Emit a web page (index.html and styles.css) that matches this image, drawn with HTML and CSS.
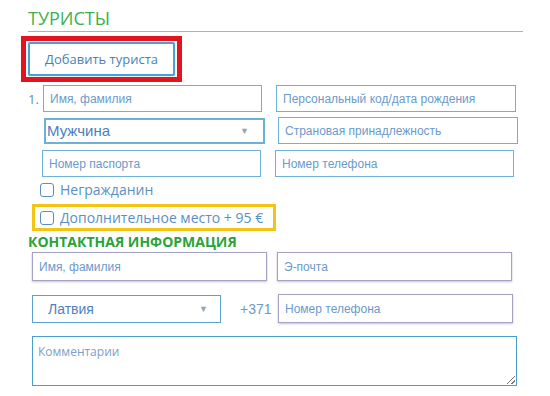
FILE: index.html
```html
<!DOCTYPE html>
<html>
<head>
<meta charset="utf-8">
<link rel="stylesheet" href="styles.css">
</head>
<body>
<div class="page">
  <h2 class="title">ТУРИСТЫ</h2>
  <div class="add-wrap"><button class="add-btn">Добавить туриста</button></div>

  <div class="row r1">
    <span class="num">1.</span>
    <div class="field w219">Имя, фамилия</div>
    <div class="field w240 ml14">Персональный код/дата рождения</div>
  </div>
  <div class="row r2">
    <div class="field select w221 sel-gender"><span>Мужчина</span><span class="arrow">▼</span></div>
    <div class="field w240 ml13">Страновая принадлежность</div>
  </div>
  <div class="row r3">
    <div class="field w219">Номер паспорта</div>
    <div class="field w239 ml14">Номер телефона</div>
  </div>

  <label class="check c1"><span class="box"></span>Негражданин</label>
  <div class="extra"><label class="check"><span class="box"></span>Дополнительное место + 95 €</label></div>

  <h3 class="subtitle">КОНТАКТНАЯ ИНФОРМАЦИЯ</h3>
  <div class="row r4">
    <div class="field contact w235">Имя, фамилия</div>
    <div class="field contact w235 ml10">Э-почта</div>
  </div>
  <div class="row r5">
    <div class="field select w189 sel-country"><span>Латвия</span><span class="arrow">▼</span></div>
    <span class="code">+371</span>
    <div class="field contact w235">Номер телефона</div>
  </div>
  <div class="comment">Комментарии<span class="grip"></span></div>
</div>
</body>
</html>
```
FILE: styles.css
```css
* { box-sizing: border-box; }
body { margin: 0; background: #fff; font-family: "Liberation Sans", Arial, sans-serif; }
.page { width: 550px; height: 396px; padding: 0 27px 0 28px; position: relative; }
.title {
  margin: 0; padding-top: 7px; height: 32px;
  font-family: "Open Sans", sans-serif; font-weight: 400; font-size: 18px;
  color: #3db04d; line-height: 22px;
  border-bottom: 1px solid #8dbad8; width: 495px;
}
.add-wrap {
  margin: 4px 0 0 -7px; width: 161px; height: 46px;
  border: 5px solid #e3141f; padding: 1px 2px;
}
.add-btn {
  width: 147px; height: 34px; margin: 0;
  background: #fff; border: 2px solid #4d9fd6; border-radius: 2px;
  font-family: "Open Sans", sans-serif; font-size: 13px; color: #4d7fb4;
  box-shadow: 0 0 2px rgba(77,159,214,.5);
}
.row { display: flex; align-items: center; }
.r1 { margin-top: 3px; }
.r2 { margin-top: 5px; margin-left: 16px; }
.r3 { margin-top: 6px; margin-left: 14px; }
.num { width: 15px; font-family: "Open Sans", sans-serif; font-size: 13px; color: #5a8fc4; }
.field {
  height: 27px; border: 1.5px solid #6eb0d6;
  padding: 0 6px; display: flex; align-items: center;
  font-size: 12px; color: #6b9acb; white-space: nowrap;
}
.w219 { width: 219px; } .w221 { width: 221px; } .w240 { width: 240px; } .w239 { width: 239px; }
.w235 { width: 235px; } .w189 { width: 189px; }
.ml14 { margin-left: 14px; } .ml13 { margin-left: 13px; } .ml10 { margin-left: 10px; }
.select { justify-content: space-between; }
.sel-gender { height: 26px; padding: 0 14px 0 1px; font-size: 15px; color: #4a7fbf; border-width: 2px; }
.arrow { font-size: 9px; color: #9aa3ad; }
.check {
  display: flex; align-items: center; font-family: "Open Sans", sans-serif;
  font-size: 14px; color: #5a8fc4; line-height: 18px;
}
.box {
  width: 14px; height: 14px; border: 1.5px solid #5a8fc4; border-radius: 3px;
  margin-right: 6px; background: #fff;
}
.c1 { margin: 4px 0 0 12px; }
.extra {
  margin: 5px 0 0 4px; width: 244px; height: 27px;
  border: 3px solid #f4c414; padding-left: 5px; display: flex; align-items: center;
}
.subtitle {
  margin: 2px 0 0 0; font-family: "Open Sans", sans-serif; font-weight: 700;
  font-size: 14px; line-height: 18px; color: #2aa237;
}
.contact { border: 1.5px solid #a4a2c4; box-shadow: 0 1px 2px rgba(80,80,120,.35); height: 29px; }
.r4 { margin-top: 1px; margin-left: 4px; }
.r5 { margin-top: 13px; margin-left: 4px; }
.sel-country { height: 28px; padding: 0 12px 0 15px; font-size: 14px; color: #4f82bd; border: 1.5px solid #5aa3cf; }
.code { width: 57px; padding-left: 19px; font-size: 14px; color: #6b9acb; }
.comment {
  position: relative;
  margin: 13px 0 0 4px; width: 485px; height: 50px;
  border: 1.5px solid #4aa0cc; padding: 6px 5px;
  font-family: "Open Sans", sans-serif; font-size: 12px; color: #7c9fc8;
}
.grip {
  position: absolute; right: 1px; bottom: 1px; width: 8px; height: 8px;
  background: linear-gradient(135deg, transparent 45%, #777 45%, #777 55%, transparent 55%, transparent 75%, #777 75%, #777 85%, transparent 85%);
}
```
